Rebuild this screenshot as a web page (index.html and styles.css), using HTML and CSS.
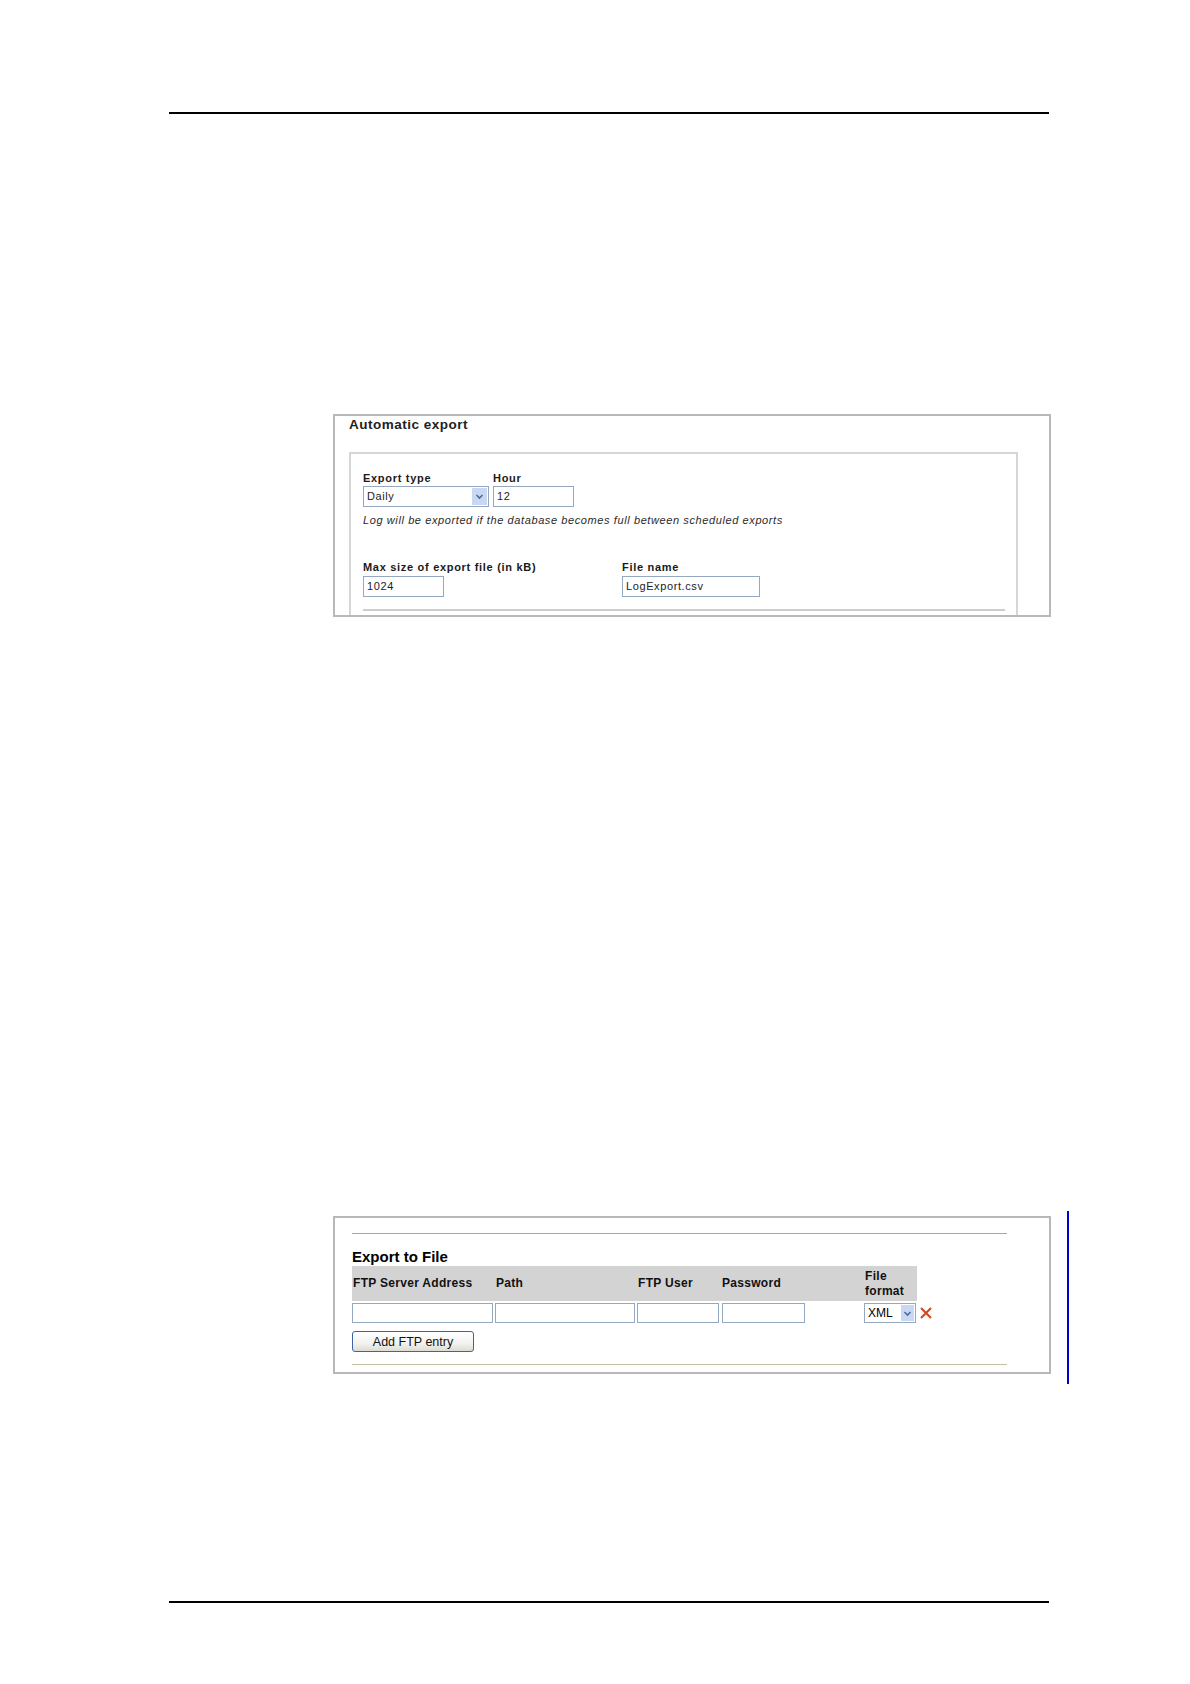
FILE: index.html
```html
<!DOCTYPE html>
<html lang="en">
<head>
    <meta charset="UTF-8">
    <meta name="viewport" content="width=device-width, initial-scale=1.0">
    <title>Log export settings</title>
    <link rel="stylesheet" href="styles.css">
</head>
<body>
    <div class="page">
        <div class="rule"></div>

        <div class="panel panel-auto">
            <div class="panel-title">Automatic export</div>
            <div class="group">
                <div class="fields fields-type">
                    <span class="lbl">Export type</span>
                    <span class="lbl">Hour</span>
                    <div class="select">
                        <span class="select-value">Daily</span>
                        <span class="select-btn">
                            <svg width="9" height="7" viewBox="0 0 9 7"><path d="M1.5 2 L4.5 5 L7.5 2" fill="none" stroke="#4d6a9c" stroke-width="1.6"/></svg>
                        </span>
                    </div>
                    <div class="input">12</div>
                </div>
                <p class="note">Log will be exported if the database becomes full between scheduled exports</p>
                <div class="fields fields-size">
                    <span class="lbl">Max size of export file (in kB)</span>
                    <span class="lbl">File name</span>
                    <div class="input">1024</div>
                    <div class="input">LogExport.csv</div>
                </div>
                <div class="group-rule"></div>
            </div>
        </div>

        <div class="ftp-row">
            <div class="panel panel-ftp">
                <div class="ftp-rule"></div>
                <h3 class="ftp-title">Export to File</h3>
                <div class="ftp-grid">
                    <div class="th">FTP Server Address</div>
                    <div class="th">Path</div>
                    <div class="th">FTP User</div>
                    <div class="th">Password</div>
                    <div class="th">File<br>format</div>
                    <div></div>

                    <div class="input input-ftp w-addr"></div>
                    <div class="input input-ftp w-path"></div>
                    <div class="input input-ftp w-user"></div>
                    <div class="input input-ftp w-pass"></div>
                    <div class="select select-ftp">
                        <span class="select-value">XML</span>
                        <span class="select-btn">
                            <svg width="9" height="7" viewBox="0 0 9 7"><path d="M1.5 2 L4.5 5 L7.5 2" fill="none" stroke="#4d6a9c" stroke-width="1.6"/></svg>
                        </span>
                    </div>
                    <div class="remove">
                        <svg width="12" height="12" viewBox="0 0 12 12"><path d="M1 1 L11 11 M11 1 L1 11" stroke="#d8441a" stroke-width="2"/></svg>
                    </div>
                </div>
                <button class="btn">Add FTP entry</button>
                <div class="ftp-rule ftp-rule-end"></div>
            </div>
            <div class="change-bar"></div>
        </div>

        <div class="rule rule-foot"></div>
    </div>
</body>
</html>
```

FILE: styles.css
```css
body {
    margin: 0;
    background: white;
    font-family: "Liberation Sans", Arial, sans-serif;
    color: #111;
}

.page {
    padding: 112px 0 0 169px;
}

.rule {
    width: 880px;
    height: 2px;
    background: #000;
}

.rule-foot {
    margin-top: 217px;
}

/* framed screenshots */
.panel {
    box-sizing: border-box;
    width: 718px;
    margin-left: 164px;
    border: 2px solid #b8b8b8;
    background: white;
    overflow: hidden;
}

.panel-auto {
    height: 203px;
    margin-top: 300px;
    padding-top: 1px;
}

.panel-title {
    margin-left: 14px;
    font-size: 13.5px;
    line-height: 16px;
    font-weight: bold;
    letter-spacing: 0.5px;
    color: #222;
}

.group {
    margin: 19px 31px 0 14px;
    border: 2px solid #d6d6d6;
    border-bottom: none;
    padding: 18px 11px 20px 12px;
}

.fields {
    display: grid;
    grid-template-rows: 13px 21px;
    align-items: start;
}

.fields-type {
    grid-template-columns: 126px 81px;
    column-gap: 4px;
    row-gap: 1px;
}

.fields-size {
    grid-template-columns: 259px 138px;
    row-gap: 2px;
    margin-top: 34px;
}

.lbl {
    font-size: 11px;
    line-height: 13px;
    font-weight: bold;
    letter-spacing: 0.7px;
    color: #1a1a1a;
    white-space: nowrap;
}

.input {
    box-sizing: border-box;
    height: 21px;
    border: 1px solid #94a8c2;
    background: white;
    padding-left: 3px;
    font-size: 11px;
    line-height: 19px;
    letter-spacing: 0.6px;
    color: #222;
}

.fields-size .input:first-of-type {
    width: 81px;
}

.select {
    box-sizing: border-box;
    height: 21px;
    display: flex;
    border: 1px solid #94a8c2;
    background: white;
    font-size: 11px;
    line-height: 19px;
    letter-spacing: 0.6px;
    color: #222;
}

.select-value {
    flex: 1;
    padding-left: 3px;
}

.select-btn {
    width: 15px;
    margin: 1px;
    display: flex;
    align-items: center;
    justify-content: center;
    background: #c9d8f2;
}

.note {
    margin: 7px 0 0;
    font-size: 11px;
    line-height: 13px;
    font-style: italic;
    letter-spacing: 0.6px;
    color: #2a2a2a;
}

.group-rule {
    margin-top: 12px;
    height: 2px;
    background: #cdcdcd;
}

/* ftp panel */
.ftp-row {
    display: flex;
    align-items: flex-start;
    margin-top: 599px;
}

.panel-ftp {
    height: 158px;
    padding: 15px 42px 0 17px;
}

.change-bar {
    width: 2px;
    height: 173px;
    margin: -5px 0 0 16px;
    background: #0000cc;
}

.ftp-rule {
    height: 1px;
    background: #a6a6a6;
}

.ftp-rule-end {
    margin-top: 12px;
    background: #c4bf9f;
}

.ftp-title {
    margin: 14px 0 0;
    font-size: 15px;
    line-height: 18px;
    font-weight: bold;
    color: #000;
}

.ftp-grid {
    display: grid;
    grid-template-columns: 143px 142px 84px 143px 53px 20px;
    grid-template-rows: 35px 20px;
    row-gap: 2px;
}

.th {
    display: flex;
    align-items: center;
    padding-left: 1px;
    background: #d3d3d3;
    font-size: 12px;
    line-height: 15px;
    font-weight: bold;
    letter-spacing: 0.3px;
    color: #111;
    white-space: nowrap;
}

.input-ftp {
    height: 20px;
}

.w-addr { width: 141px; }
.w-path { width: 140px; }
.w-user { width: 82px; }
.w-pass { width: 83px; margin-left: 1px; }

.select-ftp {
    height: 20px;
    width: 52px;
    font-size: 12px;
    line-height: 18px;
    letter-spacing: 0;
    color: #000;
}

.select-ftp .select-btn {
    width: 13px;
}

.remove {
    display: flex;
    align-items: center;
    padding-left: 3px;
}

.btn {
    display: block;
    box-sizing: border-box;
    width: 122px;
    height: 21px;
    margin-top: 8px;
    padding: 0;
    border: 1px solid #3a66a8;
    border-radius: 3px;
    background: linear-gradient(#ffffff, #f2f2ee 60%, #dcdcd4);
    font-family: "Liberation Sans", Arial, sans-serif;
    font-size: 12.5px;
    color: #111;
}
```
